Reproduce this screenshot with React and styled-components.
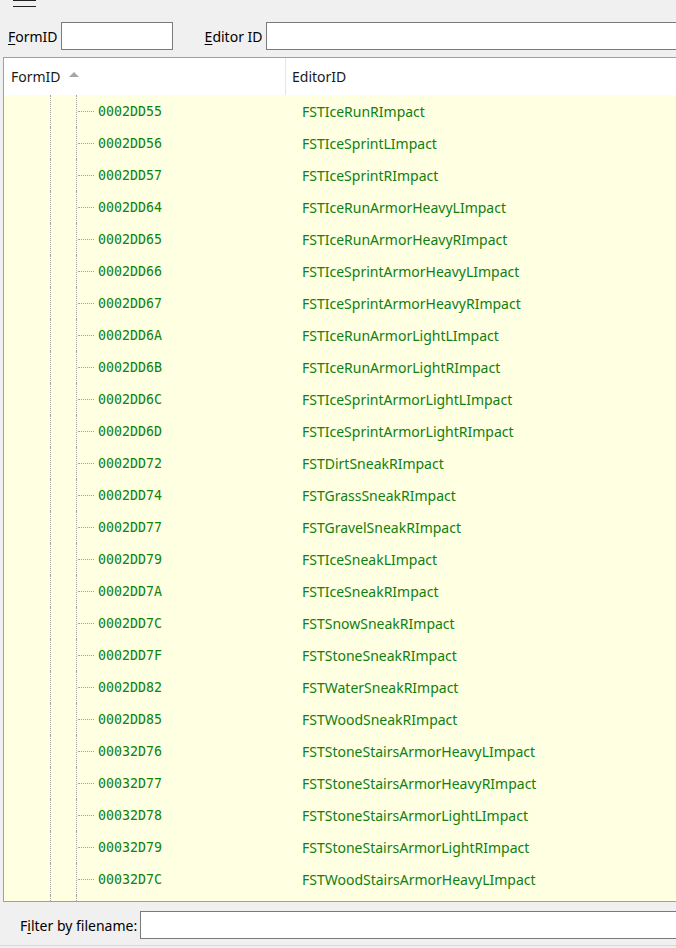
import React from 'react';
import styled, { createGlobalStyle } from 'styled-components';

const GlobalStyle = createGlobalStyle`
    html, body {
        margin: 0;
        padding: 0;
        background: #f0f0f0;
        overflow: hidden;
    }
    body {
        font-family: 'Noto Sans', 'Open Sans', sans-serif;
        font-size: 14px;
        color: #000;
    }
`;

const rows = [
    ['0002DD55', 'FSTIceRunRImpact'],
    ['0002DD56', 'FSTIceSprintLImpact'],
    ['0002DD57', 'FSTIceSprintRImpact'],
    ['0002DD64', 'FSTIceRunArmorHeavyLImpact'],
    ['0002DD65', 'FSTIceRunArmorHeavyRImpact'],
    ['0002DD66', 'FSTIceSprintArmorHeavyLImpact'],
    ['0002DD67', 'FSTIceSprintArmorHeavyRImpact'],
    ['0002DD6A', 'FSTIceRunArmorLightLImpact'],
    ['0002DD6B', 'FSTIceRunArmorLightRImpact'],
    ['0002DD6C', 'FSTIceSprintArmorLightLImpact'],
    ['0002DD6D', 'FSTIceSprintArmorLightRImpact'],
    ['0002DD72', 'FSTDirtSneakRImpact'],
    ['0002DD74', 'FSTGrassSneakRImpact'],
    ['0002DD77', 'FSTGravelSneakRImpact'],
    ['0002DD79', 'FSTIceSneakLImpact'],
    ['0002DD7A', 'FSTIceSneakRImpact'],
    ['0002DD7C', 'FSTSnowSneakRImpact'],
    ['0002DD7F', 'FSTStoneSneakRImpact'],
    ['0002DD82', 'FSTWaterSneakRImpact'],
    ['0002DD85', 'FSTWoodSneakRImpact'],
    ['00032D76', 'FSTStoneStairsArmorHeavyLImpact'],
    ['00032D77', 'FSTStoneStairsArmorHeavyRImpact'],
    ['00032D78', 'FSTStoneStairsArmorLightLImpact'],
    ['00032D79', 'FSTStoneStairsArmorLightRImpact'],
    ['00032D7C', 'FSTWoodStairsArmorHeavyLImpact'],
    ['00032D7D', 'FSTWoodStairsArmorHeavyRImpact'],
];

const Window = styled.div`
    width: 676px;
    height: 948px;
    display: flex;
    flex-direction: column;
    overflow: hidden;
`;

const TopBar = styled.div`
    height: 16px;
    padding-left: 13px;
    display: flex;
    align-items: flex-start;
`;

const MenuButton = styled.div`
    width: 23px;
    height: 7px;
    border-top: 1px solid #202020;
    border-bottom: 1px solid #202020;
    box-sizing: border-box;
`;

const FilterRow = styled.div`
    display: flex;
    align-items: center;
    height: 28px;
    margin-top: ${(p) => p.$top || 6}px;
    padding-left: ${(p) => p.$indent || 8}px;
`;

const Label = styled.label`
    font-size: 14px;
    margin-right: 3px;
    margin-left: ${(p) => p.$gap || 0}px;
    white-space: nowrap;
    u {
        text-decoration: underline;
        text-underline-offset: 2px;
    }
`;

const TextBox = styled.div`
    box-sizing: border-box;
    height: 28px;
    width: ${(p) => (p.$width ? `${p.$width}px` : 'auto')};
    flex: ${(p) => (p.$width ? 'none' : '1 1 auto')};
    min-width: 0;
    background: #fff;
    border: 1px solid #7a7a7a;
    margin-right: ${(p) => (p.$width ? 0 : -4)}px;
`;

const Table = styled.div`
    margin: 7px -10px 0 3px;
    border: 1px solid #a0a0a0;
    background: #fff;
    display: flex;
    flex-direction: column;
`;

const HeaderRow = styled.div`
    display: grid;
    grid-template-columns: 282px 1fr;
    height: 37px;
    background: #fff;
`;

const HeaderCell = styled.div`
    display: flex;
    align-items: center;
    padding-left: ${(p) => p.$pad}px;
    padding-bottom: 1px;
    border-right: 1px solid #e5e5e5;
    font-size: 14px;
    color: #1a1a1a;
`;

const SortArrow = styled.span`
    margin-left: 8px;
    width: 0;
    height: 0;
    border-left: 5px solid transparent;
    border-right: 5px solid transparent;
    border-bottom: 5px solid #a6a6a6;
    margin-bottom: 3px;
`;

const Body = styled.div`
    height: 806px;
    overflow: hidden;
    background: #ffffe1;
`;

const Row = styled.div`
    display: grid;
    grid-template-columns: 282px 1fr;
    height: 32px;
    background: #ffffe1;
`;

const TreeCell = styled.div`
    position: relative;
    display: flex;
    align-items: center;
    padding-left: 94px;
    padding-top: 1px;
`;

const Guide = styled.span`
    position: absolute;
    top: 0;
    bottom: 0;
    left: ${(p) => p.$x}px;
    border-left: 1px dotted #a0a0a0;
`;

const Branch = styled.span`
    position: absolute;
    top: 16px;
    left: 74px;
    width: 16px;
    border-top: 1px dotted #a0a0a0;
`;

const FormId = styled.span`
    font-family: 'DejaVu Sans Mono', 'Liberation Mono', monospace;
    font-size: 13.3px;
    color: #108010;
`;

const EditorCell = styled.div`
    display: flex;
    align-items: center;
    padding-left: 16px;
    font-size: 14px;
    color: #108010;
`;

const Footer = styled.div`
    flex: 1;
    display: flex;
    flex-direction: column;
`;

const BottomLine = styled.div`
    margin-top: auto;
    height: 2px;
    border-top: 1px solid #d8d8d8;
`;

const App = () => {
    return (
        <Window>
            <GlobalStyle />
            <TopBar>
                <MenuButton />
            </TopBar>
            <FilterRow>
                <Label>
                    <u>F</u>ormID
                </Label>
                <TextBox $width={112} />
                <Label $gap={32}>
                    <u>E</u>ditor ID
                </Label>
                <TextBox />
            </FilterRow>
            <Table>
                <HeaderRow>
                    <HeaderCell $pad={7}>
                        FormID
                        <SortArrow />
                    </HeaderCell>
                    <HeaderCell $pad={6}>EditorID</HeaderCell>
                </HeaderRow>
                <Body>
                    {rows.map(([id, name]) => (
                        <Row key={id}>
                            <TreeCell>
                                <Guide $x={46} />
                                <Guide $x={72} />
                                <Branch />
                                <FormId>{id}</FormId>
                            </TreeCell>
                            <EditorCell>{name}</EditorCell>
                        </Row>
                    ))}
                </Body>
            </Table>
            <Footer>
                <FilterRow $indent={20} $top={9}>
                    <Label>
                        F<u>i</u>lter by filename:
                    </Label>
                    <TextBox />
                </FilterRow>
                <BottomLine />
            </Footer>
        </Window>
    );
};

export default App;
